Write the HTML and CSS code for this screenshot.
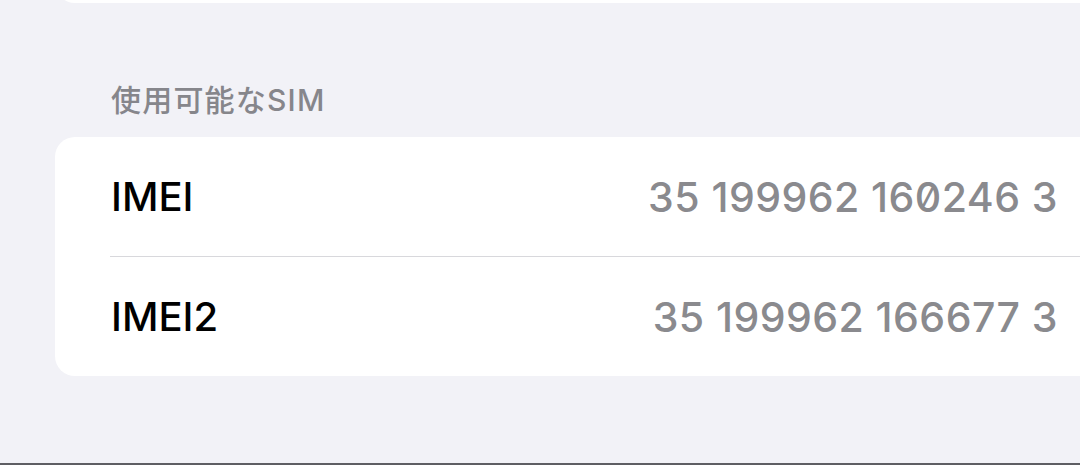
FILE: index.html
```html
<!DOCTYPE html>
<html lang="ja">
<head>
<meta charset="utf-8">
<title>SIM</title>
<link rel="stylesheet" href="styles.css">
</head>
<body>
<div class="page">
  <div class="top-card"></div>
  <div class="section-header">使用可能なSIM</div>
  <div class="card">
    <div class="row row-sep">
      <span class="label">IMEI</span>
      <span class="value">35 199962 160246 3</span>
    </div>
    <div class="row">
      <span class="label">IMEI2</span>
      <span class="value">35 199962 166677 3</span>
    </div>
  </div>
  <div class="bottom-line"></div>
</div>
</body>
</html>
```
FILE: styles.css
```css
html, body {
  margin: 0;
  padding: 0;
}
body {
  background: #f2f2f7;
  width: 1080px;
  height: 465px;
  overflow: hidden;
  font-family: Inter, "Noto Sans CJK JP", sans-serif;
}
.page {
  display: flex;
  flex-direction: column;
  height: 465px;
}
.top-card {
  height: 43px;
  margin: -40px -33px 0 55px;
  background: #ffffff;
  border-radius: 20px;
  flex: none;
}
.section-header {
  margin-top: 79px;
  padding-left: 111px;
  font-size: 30px;
  line-height: 36px;
  height: 36px;
  color: #86868b;
  font-weight: 500;
  letter-spacing: 1.2px;
  flex: none;
}
.card {
  margin: 19px -33px 0 55px;
  background: #ffffff;
  border-radius: 20px;
  flex: none;
}
.row {
  display: flex;
  align-items: center;
  justify-content: space-between;
  height: 119px;
  margin-left: 55px;
  padding-right: 55px;
}
.row-sep {
  border-bottom: 1px solid #d8d8dc;
}
.label {
  font-size: 40px;
  font-weight: 550;
  color: #000000;
  padding-left: 1px;
}
.value {
  font-size: 41px;
  font-weight: 550;
  color: #8a8a8e;
  letter-spacing: 0.45px;
  font-feature-settings: "zero" 1;
}
.bottom-line {
  margin-top: auto;
  height: 2px;
  background: #5e5e63;
  flex: none;
}
```
